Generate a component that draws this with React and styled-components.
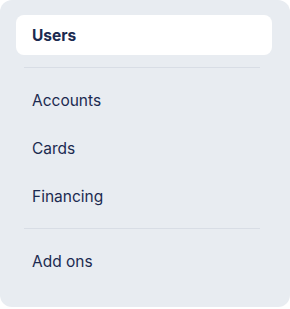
import React from 'react';
import styled, { createGlobalStyle } from 'styled-components';

const GlobalStyle = createGlobalStyle`
  body {
    margin: 0;
    background: #ffffff;
    font-family: Inter, "Noto Sans", sans-serif;
  }
`;

const Panel = styled.nav`
  width: 290px;
  height: 307px;
  box-sizing: border-box;
  padding: 15px 18px 0 16px;
  background: #e8ecf1;
  border-radius: 12px;
  display: flex;
  flex-direction: column;
`;

const Group = styled.div`
  display: flex;
  flex-direction: column;
  gap: 8px;
`;

const Item = styled.a`
  display: flex;
  align-items: center;
  height: 40px;
  padding: 0 16px;
  border-radius: 8px;
  font-size: 15.5px;
  font-weight: ${p => (p.active ? 700 : 400)};
  color: #1b2a50;
  background: ${p => (p.active ? '#ffffff' : 'transparent')};
  text-decoration: none;
  cursor: pointer;
`;

const Divider = styled.hr`
  border: none;
  height: 1px;
  background: #d8dde5;
  margin: 12px 12px 12px 8px;
`;

export default function App() {
  return (
    <>
      <GlobalStyle />
      <Panel>
        <Item active>Users</Item>
        <Divider />
        <Group>
          <Item>Accounts</Item>
          <Item>Cards</Item>
          <Item>Financing</Item>
        </Group>
        <Divider />
        <Item>Add ons</Item>
      </Panel>
    </>
  );
}
